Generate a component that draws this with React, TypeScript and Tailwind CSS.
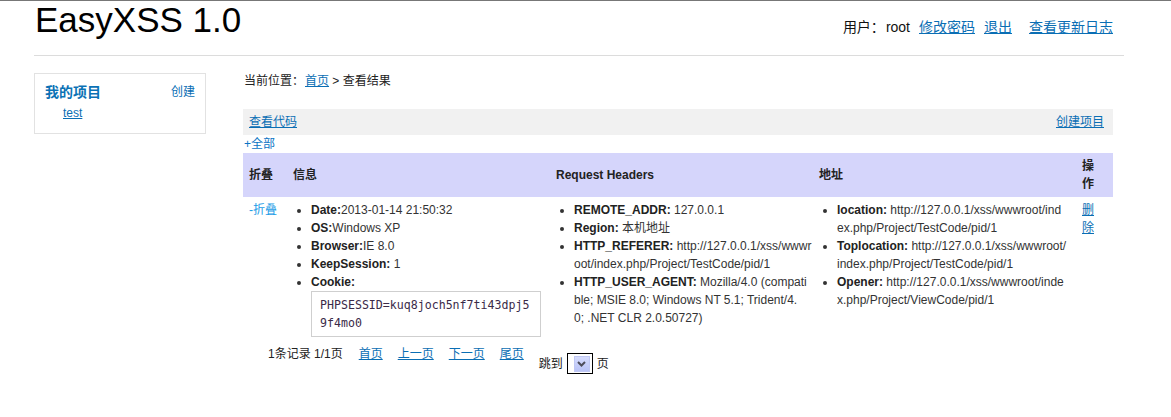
import React from "react";

const FONT = '"Liberation Sans", "Noto Sans CJK SC", Arial, sans-serif';

function Item({ label, lines }: { label: string; lines: string[] }) {
  return (
    <li className="leading-[18px] whitespace-nowrap">
      <b className="font-bold text-[#222]">{label}</b>
      {lines.map((l, i) => (
        <React.Fragment key={i}>
          {i > 0 && <br />}
          {l}
        </React.Fragment>
      ))}
    </li>
  );
}

export default function App() {
  return (
    <div
      className="min-h-[417px] w-full bg-white border-t border-[#777] text-[#333]"
      style={{ fontFamily: FONT }}
    >
      <div className="ml-[34px] w-[1090px]">
        {/* Header */}
        <div className="flex h-[55px] items-start justify-between border-b border-[#dcdcdc]">
          <div className="mt-[1px] pl-[1px] text-[35px] leading-[35px] text-black">
            EasyXSS 1.0
          </div>
          <div className="mt-[16px] mr-[11px] flex items-center text-[14px] leading-[20px] text-[#111]">
            <span>用户：</span>
            <span className="ml-[1px]">root</span>
            <a href="#" className="ml-[9px] text-[#0a6eb4] underline">修改密码</a>
            <a href="#" className="ml-[9px] text-[#0a6eb4] underline">退出</a>
            <a href="#" className="ml-[17px] text-[#0a6eb4] underline">查看更新日志</a>
          </div>
        </div>

        {/* Body */}
        <div className="flex items-start pt-[17px]">
          {/* Sidebar */}
          <div className="w-[172px] h-[61px] border border-[#e2e2e2] px-[10px] pt-[8px]">
            <div className="flex items-center justify-between">
              <span className="text-[14px] leading-[20px] font-bold text-[#0b72b5]">我的项目</span>
              <a href="#" className="text-[12px] leading-[18px] text-[#0a6eb4]">创建</a>
            </div>
            <div className="pl-[18px] mt-[2px] leading-[16px]">
              <a href="#" className="text-[12px] leading-[16px] text-[#0a6eb4] underline">test</a>
            </div>
          </div>

          {/* Main */}
          <div className="ml-[37px] w-[870px] text-[12px]">
            <div className="pl-[1px] leading-[16px] text-[#222]">
              当前位置：
              <a href="#" className="ml-[1px] text-[#0a6eb4] underline">首页</a>
              <span> &gt; 查看结果</span>
            </div>

            <div className="mt-[20px] flex h-[26px] items-center justify-between bg-[#f1f1f1] pl-[6px] pr-[9px]">
              <a href="#" className="text-[#0a6eb4] underline">查看代码</a>
              <a href="#" className="text-[#0a6eb4] underline">创建项目</a>
            </div>

            <div className="leading-[18px] pl-[1px]">
              <a href="#" className="text-[#0b74c4]">+全部</a>
            </div>

            <table className="w-[870px] table-fixed border-collapse">
              <colgroup>
                <col className="w-[44px]" />
                <col className="w-[263px]" />
                <col className="w-[263px]" />
                <col className="w-[263px]" />
                <col className="w-[37px]" />
              </colgroup>
              <thead>
                <tr className="bg-[#d5d5fb] text-[#222]">
                  <th className="pl-[6px] py-[4px] text-left align-middle font-bold leading-[18px]">折叠</th>
                  <th className="pl-[6px] py-[4px] text-left align-middle font-bold leading-[18px]">信息</th>
                  <th className="pl-[6px] py-[4px] text-left align-middle font-bold leading-[18px]">Request Headers</th>
                  <th className="pl-[6px] py-[4px] text-left align-middle font-bold leading-[18px]">地址</th>
                  <th className="pl-[6px] py-[4px] text-left align-middle font-bold leading-[18px]">
                    操<br />作
                  </th>
                </tr>
              </thead>
              <tbody>
                <tr>
                  <td className="pl-[6px] pt-[4px] pb-[4px] align-top leading-[18px]">
                    <a href="#" className="text-[#1a9be6]">-折叠</a>
                  </td>
                  <td className="pl-[6px] pt-[4px] pb-[4px] align-top">
                    <ul className="list-disc pl-[18px]">
                      <Item label="Date:" lines={["2013-01-14 21:50:32"]} />
                      <Item label="OS:" lines={["Windows XP"]} />
                      <Item label="Browser:" lines={["IE 8.0"]} />
                      <Item label="KeepSession:" lines={[" 1"]} />
                      <li className="leading-[18px]">
                        <b className="font-bold text-[#222]">Cookie:</b>
                        <div
                          className="w-[230px] border border-[#cfcfcf] px-[8px] py-[4px] text-[11.6px] leading-[18px] break-all text-[#3a2a48]"
                          style={{ fontFamily: '"DejaVu Sans Mono", "Liberation Mono", monospace' }}
                        >
                          PHPSESSID=kuq8joch5nf7ti43dpj5
                          <br />
                          9f4mo0
                        </div>
                      </li>
                    </ul>
                  </td>
                  <td className="pl-[6px] pt-[4px] pb-[4px] align-top">
                    <ul className="list-disc pl-[18px]">
                      <Item label="REMOTE_ADDR:" lines={[" 127.0.0.1"]} />
                      <Item label="Region:" lines={[" 本机地址"]} />
                      <Item
                        label="HTTP_REFERER:"
                        lines={[" http://127.0.0.1/xss/wwwr", "oot/index.php/Project/TestCode/pid/1"]}
                      />
                      <Item
                        label="HTTP_USER_AGENT:"
                        lines={[
                          " Mozilla/4.0 (compati",
                          "ble; MSIE 8.0; Windows NT 5.1; Trident/4.",
                          "0; .NET CLR 2.0.50727)",
                        ]}
                      />
                    </ul>
                  </td>
                  <td className="pl-[6px] pt-[4px] pb-[4px] align-top">
                    <ul className="list-disc pl-[18px]">
                      <Item
                        label="location:"
                        lines={[" http://127.0.0.1/xss/wwwroot/ind", "ex.php/Project/TestCode/pid/1"]}
                      />
                      <Item
                        label="Toplocation:"
                        lines={[" http://127.0.0.1/xss/wwwroot/", "index.php/Project/TestCode/pid/1"]}
                      />
                      <Item
                        label="Opener:"
                        lines={[" http://127.0.0.1/xss/wwwroot/inde", "x.php/Project/ViewCode/pid/1"]}
                      />
                    </ul>
                  </td>
                  <td className="pl-[6px] pt-[4px] pb-[4px] align-top leading-[18px]">
                    <a href="#" className="text-[#0a6eb4] underline">
                      删<br />除
                    </a>
                  </td>
                </tr>
              </tbody>
            </table>

            {/* Pagination */}
            <div className="mt-[4px] ml-[25px] flex items-start leading-[18px] text-[#222]">
              <span>1条记录 1/1页</span>
              <a href="#" className="ml-[16px] text-[#0a6eb4] underline">首页</a>
              <a href="#" className="ml-[15px] text-[#0a6eb4] underline">上一页</a>
              <a href="#" className="ml-[15px] text-[#0a6eb4] underline">下一页</a>
              <a href="#" className="ml-[15px] text-[#0a6eb4] underline">尾页</a>
              <div className="ml-[15px] mt-[8px] flex items-center">
                <span>跳到</span>
                <div className="ml-[4px] flex h-[21px] w-[26px] items-center justify-end border border-black pr-[2px]">
                  <div className="flex h-[16px] w-[16px] items-center justify-center bg-gradient-to-b from-[#d6dcfd] to-[#b9c3f7] border border-[#c0c8f4]">
                    <svg width="9" height="6" viewBox="0 0 9 6">
                      <path d="M1 1 L4.5 4.5 L8 1" stroke="#4d4d5a" strokeWidth="2" fill="none" />
                    </svg>
                  </div>
                </div>
                <span className="ml-[4px]">页</span>
              </div>
            </div>
          </div>
        </div>
      </div>
    </div>
  );
}
